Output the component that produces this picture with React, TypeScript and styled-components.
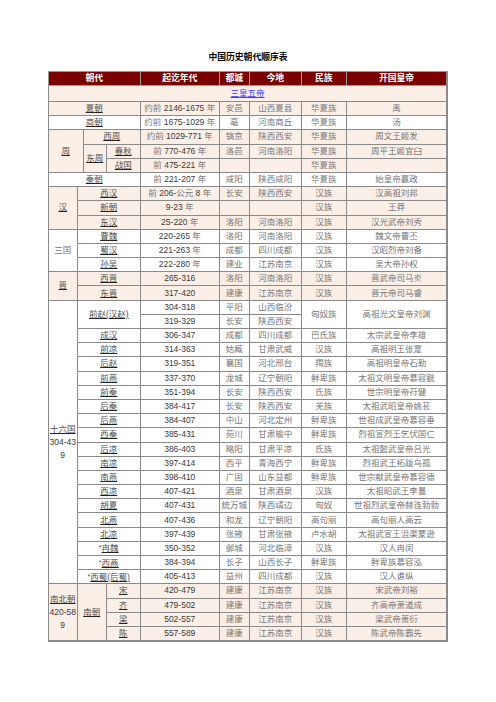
import React, { ReactElement, ReactNode } from 'react';
import styled, { createGlobalStyle } from 'styled-components';

const GlobalStyle = createGlobalStyle`
  body {
    margin: 0;
    background: #fff;
    font-family: "Liberation Sans", "Noto Sans CJK SC", sans-serif;
  }
`;

const Page = styled.div`
  align-items: center;
  display: flex;
  flex-direction: column;
  padding-top: 51px;
`;

const Title = styled.h1`
  color: #000;
  font-size: 8.8px;
  font-weight: bold;
  line-height: 12px;
  margin: 0 0 8px;
`;

const Table = styled.table`
  border-bottom: 2px solid #8a8a8a;
  border-collapse: collapse;
  border-right: 2px solid #8a8a8a;
  table-layout: fixed;
  width: 399px;
`;

const Th = styled.th`
  background: #7b0000;
  border: 1px solid #9a9a9a;
  color: #fff;
  font-size: 8.8px;
  font-weight: bold;
  height: 13px;
  line-height: 11px;
  padding: 0;
  text-align: center;
`;

interface RowProps {
  $tone: 'peach' | 'white';
  $h?: number;
}

const Row = styled.tr<RowProps>`
  background: ${ props => props.$tone === 'peach' ? '#faefe6' : '#fff' };
  height: ${ props => props.$h ?? 14.2 }px;
`;

const Td = styled.td<{ $wrap?: boolean }>`
  border: 1px solid #8a8a8a;
  color: #767676;
  font-size: 8.5px;
  line-height: ${ props => props.$wrap ? '13px' : '11px' };
  overflow: hidden;
  padding: 0;
  text-align: center;
  vertical-align: middle;
  white-space: ${ props => props.$wrap ? 'normal' : 'nowrap' };
`;

const Link = styled.span<{ $blue?: boolean }>`
  color: ${ props => props.$blue ? '#3b3bff' : '#505050' };
  text-decoration: underline;
  text-decoration-color: ${ props => props.$blue ? '#3b3bff' : '#222' };
  text-underline-offset: 1px;
`;

const Num = styled.span`
  color: #3a3a3a;
`;

const Star = styled.span`
  color: #444;
  font-size: 7px;
  vertical-align: 1px;
`;

const cols = [29, 6, 23, 34, 79, 30, 52, 45, 101];

function fmt(text: string): ReactNode {
  return text.split(/([\d-]+)/).map((part, i) =>
    /\d/.test(part) ? <Num key={ i }>{ part }</Num> : part
  );
}

function Cells({ d }: { d: string[] }): ReactElement {
  return <>{ d.map((t, i) => <Td key={ i }>{ fmt(t) }</Td>) }</>;
}

const sixteen: [string, string[]][] = [
  ['成汉', ['306-347', '成都', '四川成都', '巴氐族', '太宗武皇帝李雄']],
  ['前凉', ['314-363', '姑臧', '甘肃武威', '汉族', '高祖明王张寔']],
  ['后赵', ['319-351', '襄国', '河北邢台', '羯族', '高祖明皇帝石勒']],
  ['前燕', ['337-370', '龙城', '辽宁朝阳', '鲜卑族', '太祖文明皇帝慕容皝']],
  ['前秦', ['351-394', '长安', '陕西西安', '氐族', '世宗明皇帝苻健']],
  ['后秦', ['384-417', '长安', '陕西西安', '羌族', '太祖武昭皇帝姚苌']],
  ['后燕', ['384-407', '中山', '河北定州', '鲜卑族', '世祖成武皇帝慕容垂']],
  ['西秦', ['385-431', '苑川', '甘肃榆中', '鲜卑族', '烈祖宣烈王乞伏国仁']],
  ['后凉', ['386-403', '略阳', '甘肃平凉', '氐族', '太祖懿武皇帝吕光']],
  ['南凉', ['397-414', '西平', '青海西宁', '鲜卑族', '烈祖武王拓跋乌孤']],
  ['南燕', ['398-410', '广固', '山东益都', '鲜卑族', '世宗献武皇帝慕容德']],
  ['西凉', ['407-421', '酒泉', '甘肃酒泉', '汉族', '太祖昭武王李暠']],
  ['胡夏', ['407-431', '统万城', '陕西靖边', '匈奴', '世祖烈武皇帝赫连勃勃']],
  ['北燕', ['407-436', '和龙', '辽宁朝阳', '高句丽', '高句丽人高云']],
  ['北凉', ['397-439', '张掖', '甘肃张掖', '卢水胡', '太祖武宣王沮渠蒙逊']],
  ['*冉魏', ['350-352', '邺城', '河北临漳', '汉族', '汉人冉闵']],
  ['*西燕', ['384-394', '长子', '山西长子', '鲜卑族', '鲜卑族慕容泓']],
  ['*西蜀(后蜀)', ['405-413', '益州', '四川成都', '汉族', '汉人谯纵']],
];

const southern: [string, string[]][] = [
  ['宋', ['420-479', '建康', '江苏南京', '汉族', '宋武帝刘裕']],
  ['齐', ['479-502', '建康', '江苏南京', '汉族', '齐高帝萧道成']],
  ['梁', ['502-557', '建康', '江苏南京', '汉族', '梁武帝萧衍']],
  ['陈', ['557-589', '建康', '江苏南京', '汉族', '陈武帝陈霸先']],
];

function Name({ text }: { text: string }): ReactElement {
  if (text.startsWith('*')) {
    return <><Star>*</Star><Link>{ text.slice(1) }</Link></>;
  }
  return <Link>{ text }</Link>;
}

export default function App(): ReactElement {
  return (
    <Page>
      <GlobalStyle />
      <Title>中国历史朝代顺序表</Title>
      <Table>
        <colgroup>
          { cols.map((w, i) => <col key={ i } style={ { width: w } } />) }
        </colgroup>
        <thead>
          <tr>
            <Th colSpan={ 4 }>朝代</Th>
            <Th>起讫年代</Th>
            <Th>都城</Th>
            <Th>今地</Th>
            <Th>民族</Th>
            <Th>开国皇帝</Th>
          </tr>
        </thead>
        <tbody>
          <Row $tone="peach" $h={ 16 }>
            <Td colSpan={ 9 }><Link $blue>三皇五帝</Link></Td>
          </Row>
          <Row $tone="peach">
            <Td colSpan={ 4 }><Link>夏朝</Link></Td>
            <Cells d={ ['约前 2146-1675 年', '安邑', '山西夏县', '华夏族', '禹'] } />
          </Row>
          <Row $tone="white">
            <Td colSpan={ 4 }><Link>商朝</Link></Td>
            <Cells d={ ['约前 1675-1029 年', '亳', '河南商丘', '华夏族', '汤'] } />
          </Row>
          <Row $tone="peach">
            <Td colSpan={ 2 } rowSpan={ 3 }><Link>周</Link></Td>
            <Td colSpan={ 2 }><Link>西周</Link></Td>
            <Cells d={ ['约前 1029-771 年', '镐京', '陕西西安', '华夏族', '周文王姬发'] } />
          </Row>
          <Row $tone="peach">
            <Td rowSpan={ 2 }><Link>东周</Link></Td>
            <Td><Link>春秋</Link></Td>
            <Cells d={ ['前 770-476 年', '洛邑', '河南洛阳', '华夏族', '周平王姬宜臼'] } />
          </Row>
          <Row $tone="peach">
            <Td><Link>战国</Link></Td>
            <Cells d={ ['前 475-221 年', '', '', '华夏族', ''] } />
          </Row>
          <Row $tone="white">
            <Td colSpan={ 4 }><Link>秦朝</Link></Td>
            <Cells d={ ['前 221-207 年', '咸阳', '陕西咸阳', '华夏族', '始皇帝嬴政'] } />
          </Row>
          <Row $tone="peach">
            <Td rowSpan={ 3 }><Link>汉</Link></Td>
            <Td colSpan={ 3 }><Link>西汉</Link></Td>
            <Cells d={ ['前 206-公元 8 年', '长安', '陕西西安', '汉族', '汉高祖刘邦'] } />
          </Row>
          <Row $tone="peach">
            <Td colSpan={ 3 }><Link>新朝</Link></Td>
            <Cells d={ ['9-23 年', '', '', '汉族', '王莽'] } />
          </Row>
          <Row $tone="peach">
            <Td colSpan={ 3 }><Link>东汉</Link></Td>
            <Cells d={ ['25-220 年', '洛阳', '河南洛阳', '汉族', '汉光武帝刘秀'] } />
          </Row>
          <Row $tone="white">
            <Td rowSpan={ 3 }>三国</Td>
            <Td colSpan={ 3 }><Link>曹魏</Link></Td>
            <Cells d={ ['220-265 年', '洛阳', '河南洛阳', '汉族', '魏文帝曹丕'] } />
          </Row>
          <Row $tone="white">
            <Td colSpan={ 3 }><Link>蜀汉</Link></Td>
            <Cells d={ ['221-263 年', '成都', '四川成都', '汉族', '汉昭烈帝刘备'] } />
          </Row>
          <Row $tone="white">
            <Td colSpan={ 3 }><Link>孙吴</Link></Td>
            <Cells d={ ['222-280 年', '建业', '江苏南京', '汉族', '吴大帝孙权'] } />
          </Row>
          <Row $tone="peach">
            <Td rowSpan={ 2 }><Link>晋</Link></Td>
            <Td colSpan={ 3 }><Link>西晋</Link></Td>
            <Cells d={ ['265-316', '洛阳', '河南洛阳', '汉族', '晋武帝司马炎'] } />
          </Row>
          <Row $tone="peach">
            <Td colSpan={ 3 }><Link>东晋</Link></Td>
            <Cells d={ ['317-420', '建康', '江苏南京', '汉族', '晋元帝司马睿'] } />
          </Row>
          <Row $tone="white">
            <Td rowSpan={ 20 } $wrap>
              <Link>十六国</Link><br /><Num>304-43</Num><br /><Num>9</Num>
            </Td>
            <Td colSpan={ 3 } rowSpan={ 2 }><Link>前赵(汉赵)</Link></Td>
            <Td>{ fmt('304-318') }</Td>
            <Td>平阳</Td>
            <Td>山西临汾</Td>
            <Td rowSpan={ 2 }>匈奴族</Td>
            <Td rowSpan={ 2 }>高祖光文皇帝刘渊</Td>
          </Row>
          <Row $tone="white">
            <Td>{ fmt('319-329') }</Td>
            <Td>长安</Td>
            <Td>陕西西安</Td>
          </Row>
          { sixteen.map(([name, d]) => (
            <Row $tone="white" key={ name }>
              <Td colSpan={ 3 }><Name text={ name } /></Td>
              <Cells d={ d } />
            </Row>
          )) }
          { southern.map(([name, d], i) => (
            <Row $tone="peach" key={ name }>
              { i === 0 && (
                <>
                  <Td rowSpan={ 4 } $wrap>
                    <Link>南北朝</Link><br /><Num>420-58</Num><br /><Num>9</Num>
                  </Td>
                  <Td colSpan={ 2 } rowSpan={ 4 }><Link>南朝</Link></Td>
                </>
              ) }
              <Td><Link>{ name }</Link></Td>
              <Cells d={ d } />
            </Row>
          )) }
        </tbody>
      </Table>
    </Page>
  );
}
